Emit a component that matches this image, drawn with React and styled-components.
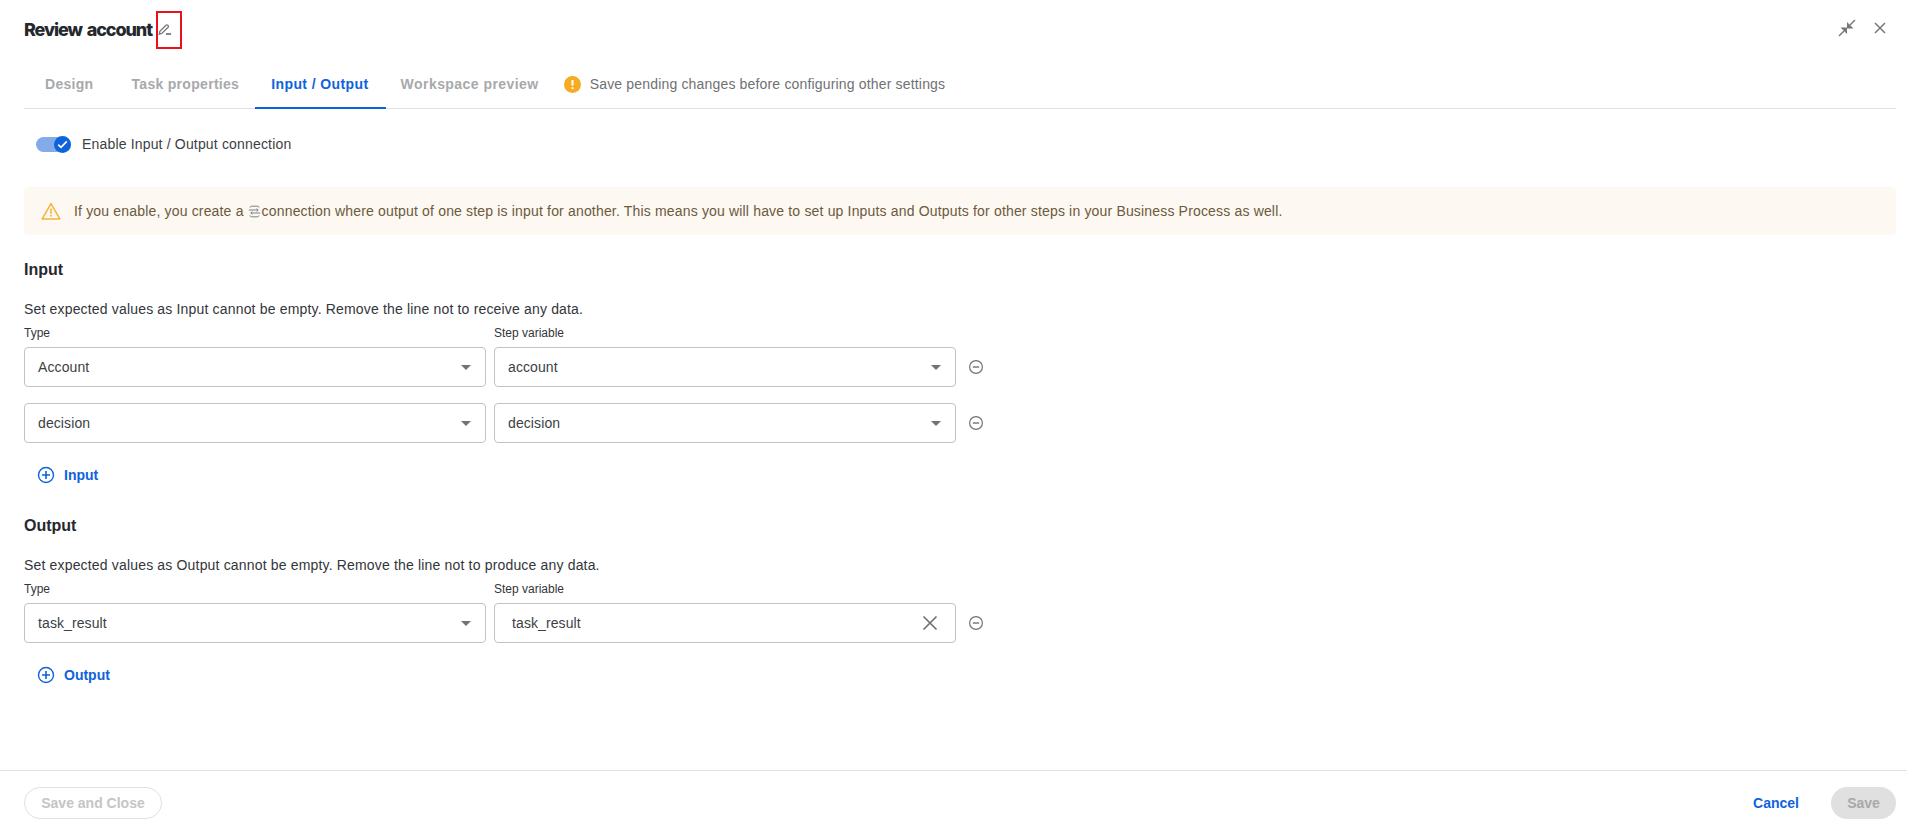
import React from "react";
import styled, { createGlobalStyle } from "styled-components";

const Global = createGlobalStyle`
  html, body { margin: 0; padding: 0; background: #fff; }
  body { font-family: "Liberation Sans", Arial, sans-serif; color: #25282d; }
`;

const Page = styled.div`
  width: 1907px;
  height: 827px;
  display: flex;
  flex-direction: column;
  overflow: hidden;
`;
const Main = styled.div`
  flex: 1;
  padding: 0 11px 0 24px;
  display: flex;
  flex-direction: column;
`;
const TitleBar = styled.div`
  height: 60px;
  display: flex;
  align-items: center;
  justify-content: space-between;
`;
const TitleGroup = styled.div`
  display: flex;
  align-items: center;
`;
const Title = styled.h1`
  margin: 0;
  width: 128px;
  white-space: nowrap;
  font: 800 18px/22px Inter, sans-serif;
  letter-spacing: -1.1px;
  word-spacing: 2px;
  color: #25282d;
`;
const EditBox = styled.span`
  width: 22px;
  height: 34px;
  margin-left: 4px;
  border: 2px solid #e5141c;
  display: flex;
  align-items: center;
  justify-content: flex-start;
`;
const WindowActions = styled.div`
  display: flex;
  align-items: center;
  gap: 18px;
  padding-right: 10px;
  margin-top: -4px;
`;
const TabBar = styled.div`
  height: 48px;
  display: flex;
  align-items: stretch;
  border-bottom: 1px solid #dfe0e2;
  box-sizing: content-box;
`;
const Tab = styled.div`
  display: flex;
  align-items: center;
  padding: 0 17px 0 ${(p) => (p.$active ? 16 : 17)}px;
  margin-left: ${(p) => p.$ml || 0}px;
  margin-bottom: -1px;
  font-size: 14px;
  font-weight: 700;
  letter-spacing: ${(p) => p.$track || 0.3}px;
  color: ${(p) => (p.$active ? "#0e63dd" : "#a8a9ab")};
  border-bottom: 2px solid ${(p) => (p.$active ? "#0e63dd" : "transparent")};
`;
const PendingNote = styled.div`
  display: flex;
  align-items: center;
  gap: 9px;
  margin-left: 8px;
  font-size: 14px;
  letter-spacing: 0.17px;
  color: #6f7175;
`;
const ToggleRow = styled.div`
  display: flex;
  align-items: center;
  height: 18px;
  margin: 26px 0 0 12px;
  font-size: 14px;
  letter-spacing: 0.17px;
  color: #3c3f44;
`;
const Track = styled.span`
  position: relative;
  width: 35px;
  height: 15px;
  border-radius: 8px;
  background: #82ace9;
  margin-right: 11px;
`;
const Knob = styled.span`
  position: absolute;
  right: 0;
  top: -1px;
  width: 17px;
  height: 17px;
  border-radius: 50%;
  background: #0e63dd;
  display: flex;
  align-items: center;
  justify-content: center;
`;
const Alert = styled.div`
  height: 48px;
  margin-top: 34px;
  padding-left: 17px;
  display: flex;
  align-items: center;
  background: #fdf8f1;
  border-radius: 4px;
  font-size: 14px;
  letter-spacing: 0.17px;
  color: #6b5a3e;
`;
const AlertIcon = styled.span`
  display: flex;
  margin-right: 13px;
`;
const InlineIcon = styled.span`
  display: inline-flex;
  margin: 0 1px 0 4px;
  vertical-align: -2px;
`;
const Heading = styled.h2`
  margin: ${(p) => p.$top}px 0 0;
  font-size: 16px;
  line-height: 20px;
  font-weight: 700;
  color: #25282d;
`;
const Description = styled.p`
  margin: 20px 0 0;
  font-size: 14px;
  line-height: 18px;
  letter-spacing: 0.17px;
  color: #33363b;
`;
const LabelRow = styled.div`
  display: grid;
  grid-template-columns: 462px 462px;
  column-gap: 8px;
  margin-top: 8px;
  font-size: 12px;
  line-height: 14px;
  color: #33363b;
`;
const FieldRow = styled.div`
  display: flex;
  align-items: center;
  gap: 8px;
  margin-top: ${(p) => p.$top}px;
`;
const Field = styled.div`
  width: 462px;
  height: 40px;
  box-sizing: border-box;
  border: 1px solid #c2c3c5;
  border-radius: 4px;
  padding: 0 ${(p) => (p.$clear ? 17 : 14)}px 0 ${(p) => (p.$clear ? 17 : 13)}px;
  display: flex;
  align-items: center;
  justify-content: space-between;
  font-size: 14px;
  letter-spacing: 0.1px;
  color: #3c3f44;
`;
const Caret = styled.span`
  width: 0;
  height: 0;
  border-left: 5.5px solid transparent;
  border-right: 5.5px solid transparent;
  border-top: 5px solid #717276;
`;
const RemoveIcon = styled.span`
  display: flex;
  margin-left: 4px;
`;
const AddButton = styled.div`
  display: flex;
  align-items: center;
  gap: 9px;
  margin: ${(p) => p.$top}px 0 0 13px;
  height: 20px;
  font-size: 14px;
  font-weight: 700;
  color: #0e63dd;
`;
const Footer = styled.div`
  height: 57px;
  box-sizing: border-box;
  border-top: 1px solid #dfe0e2;
  padding: 16px 11px 0 24px;
  display: flex;
  align-items: flex-start;
  justify-content: space-between;
`;
const FooterRight = styled.div`
  display: flex;
  align-items: center;
  gap: 32px;
`;
const OutlineButton = styled.div`
  width: 138px;
  height: 32px;
  box-sizing: border-box;
  border: 1px solid #dfe0e2;
  border-radius: 16px;
  display: flex;
  align-items: center;
  justify-content: center;
  font-size: 14px;
  font-weight: 700;
  color: #c4c5c7;
`;
const LinkButton = styled.div`
  font-size: 14px;
  font-weight: 700;
  color: #0e63dd;
`;
const FilledButton = styled.div`
  width: 65px;
  height: 32px;
  border-radius: 16px;
  background: #e0e0e0;
  display: flex;
  align-items: center;
  justify-content: center;
  font-size: 14px;
  font-weight: 700;
  color: #a8a9ab;
`;

const MinusCircle = () => (
  <svg width="16" height="16" viewBox="0 0 16 16" fill="none" stroke="#717276" strokeWidth="1.2">
    <circle cx="8" cy="8" r="6.4" />
    <path d="M4.8 8h6.4" strokeWidth="1.4" />
  </svg>
);
const PlusCircle = () => (
  <svg width="18" height="18" viewBox="0 0 18 18" fill="none" stroke="#0e63dd" strokeWidth="1.4">
    <circle cx="9" cy="9" r="7.5" />
    <path d="M9 5v8M5 9h8" strokeWidth="1.6" />
  </svg>
);

const Select = ({ value }) => (
  <Field>
    <span>{value}</span>
    <Caret />
  </Field>
);

export default function App() {
  return (
    <Page>
      <Global />
      <Main>
        <TitleBar>
          <TitleGroup>
            <Title>Review account</Title>
            <EditBox>
              <svg width="14" height="14" viewBox="0 0 15 15" fill="none" stroke="#77787b" strokeWidth="1.4">
                <path d="M1.4 12 2 9 8.6 2.4a1.3 1.3 0 0 1 1.9 0l.3.3a1.3 1.3 0 0 1 0 1.9L4.3 11z" />
                <path d="M8.5 11.8h5.5" strokeWidth="1.9" />
              </svg>
            </EditBox>
          </TitleGroup>
          <WindowActions>
            <svg width="18" height="18" viewBox="0 0 18 18" fill="none">
              <path d="M1 17 6 12" stroke="#77787b" strokeWidth="1.5" />
              <path d="M2.5 8.5H9V15z" fill="#77787b" />
              <path d="M17 1 12 6" stroke="#77787b" strokeWidth="1.5" />
              <path d="M15.5 9.5H9V3z" fill="#77787b" />
            </svg>
            <svg width="12" height="12" viewBox="0 0 12 12" fill="none" stroke="#77787b" strokeWidth="1.5">
              <path d="M1 1l10 10M11 1 1 11" />
            </svg>
          </WindowActions>
        </TitleBar>
        <TabBar>
          <Tab $ml={4}>Design</Tab>
          <Tab $ml={4}>Task properties</Tab>
          <Tab $ml={-1} $active $track={0.4}>Input / Output</Tab>
          <Tab $ml={-2} $track={0.45}>Workspace preview</Tab>
          <PendingNote>
            <svg width="17" height="17" viewBox="0 0 17 17">
              <circle cx="8.5" cy="8.5" r="8.5" fill="#f5ab22" />
              <path d="M8.5 4v5.6" stroke="#fff" strokeWidth="2" />
              <circle cx="8.5" cy="12.2" r="1.1" fill="#fff" />
            </svg>
            Save pending changes before configuring other settings
          </PendingNote>
        </TabBar>
        <ToggleRow>
          <Track>
            <Knob>
              <svg width="11" height="9" viewBox="0 0 11 9" fill="none" stroke="#fff" strokeWidth="1.6">
                <path d="M1.2 4.6 4 7.3 9.8 1.4" />
              </svg>
            </Knob>
          </Track>
          Enable Input / Output connection
        </ToggleRow>
        <Alert>
          <AlertIcon>
            <svg width="20" height="18" viewBox="0 0 20 18" fill="none">
              <path d="M10 1.6 18.8 16.9H1.2z" stroke="#f6b23c" strokeWidth="1.5" strokeLinejoin="round" />
              <path d="M10 6.5v5.2" stroke="#f6b23c" strokeWidth="1.6" />
              <circle cx="10" cy="13.8" r="1" fill="#f6b23c" />
            </svg>
          </AlertIcon>
          <span>
            If you enable, you create a
            <InlineIcon>
              <svg width="13" height="13" viewBox="0 0 13 13" fill="none" stroke="#7c8088" strokeWidth="1">
                <path d="M2 2.6C2 1.6 2.8 1.2 3.6 1.2h6c.8 0 1.4.4 1.4 1.4" />
                <path d="M2 10.4c0 1 .8 1.4 1.6 1.4h6c.8 0 1.4-.4 1.4-1.4" />
                <path d="M.8 5h9.4M8.6 3.6 10.2 5 8.6 6.4M12.2 8H2.8M4.4 6.6 2.8 8l1.6 1.4" />
              </svg>
            </InlineIcon>
            connection where output of one step is input for another. This means you will have to set up Inputs and Outputs for other steps in your Business Process as well.
          </span>
        </Alert>
        <Heading $top={25}>Input</Heading>
        <Description>Set expected values as Input cannot be empty. Remove the line not to receive any data.</Description>
        <LabelRow>
          <span>Type</span>
          <span>Step variable</span>
        </LabelRow>
        <FieldRow $top={7}>
          <Select value="Account" />
          <Select value="account" />
          <RemoveIcon><MinusCircle /></RemoveIcon>
        </FieldRow>
        <FieldRow $top={16}>
          <Select value="decision" />
          <Select value="decision" />
          <RemoveIcon><MinusCircle /></RemoveIcon>
        </FieldRow>
        <AddButton $top={22}><PlusCircle />Input</AddButton>
        <Heading $top={31}>Output</Heading>
        <Description>Set expected values as Output cannot be empty. Remove the line not to produce any data.</Description>
        <LabelRow>
          <span>Type</span>
          <span>Step variable</span>
        </LabelRow>
        <FieldRow $top={7}>
          <Select value="task_result" />
          <Field $clear>
            <span>task_result</span>
            <svg width="16" height="16" viewBox="0 0 16 16" fill="none" stroke="#717276" strokeWidth="1.7">
              <path d="M1.5 1.5l13 13M14.5 1.5l-13 13" />
            </svg>
          </Field>
          <RemoveIcon><MinusCircle /></RemoveIcon>
        </FieldRow>
        <AddButton $top={22}><PlusCircle />Output</AddButton>
      </Main>
      <Footer>
        <OutlineButton>Save and Close</OutlineButton>
        <FooterRight>
          <LinkButton>Cancel</LinkButton>
          <FilledButton>Save</FilledButton>
        </FooterRight>
      </Footer>
    </Page>
  );
}
